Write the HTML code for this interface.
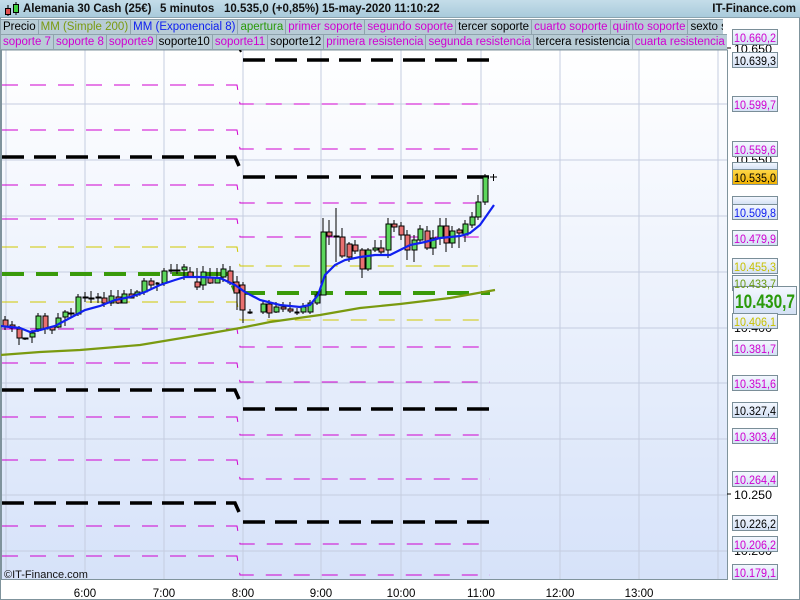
<!DOCTYPE html>
<html><head><meta charset="utf-8">
<style>
*{margin:0;padding:0;box-sizing:border-box}
body{width:800px;height:600px;overflow:hidden;background:#fff;font-family:"Liberation Sans",Arial,sans-serif;position:relative}
#title{position:absolute;left:0;top:0;width:800px;height:18px;background:linear-gradient(#c4dde9,#a9cadb);font-weight:bold;font-size:11.5px;line-height:18px;color:#111;border-bottom:1px solid #8aa4b0}
#title span{position:absolute;top:0}
.row{position:absolute;left:0;height:16px;white-space:nowrap;font-size:11.5px;line-height:15px;overflow:hidden}
.row span{display:inline-block;background:#b8ccd6;border:1px solid #8fa3ad;padding:0 2px;margin-right:-1px;height:16px}
svg{position:absolute;left:0;top:0}
</style></head><body>
<svg width="800" height="600">
<defs><linearGradient id="bg" x1="0" y1="0" x2="0" y2="1"><stop offset="0" stop-color="#ffffff"/><stop offset="1" stop-color="#d6e2f9"/></linearGradient>
<linearGradient id="lb" x1="0" y1="0" x2="0" y2="1"><stop offset="0" stop-color="#f4f8ff"/><stop offset="1" stop-color="#d3e0f4"/></linearGradient>
<linearGradient id="yb" x1="0" y1="0" x2="0" y2="1"><stop offset="0" stop-color="#ffd84a"/><stop offset="1" stop-color="#f0b000"/></linearGradient></defs>
<rect x="2" y="50" width="725" height="529" fill="url(#bg)"/>
<g stroke="#c5cde0" stroke-width="1">
<line x1="2" y1="104" x2="727" y2="104"/><line x1="2" y1="160" x2="727" y2="160"/><line x1="2" y1="216" x2="727" y2="216"/><line x1="2" y1="272" x2="727" y2="272"/><line x1="2" y1="328" x2="727" y2="328"/><line x1="2" y1="383" x2="727" y2="383"/><line x1="2" y1="439" x2="727" y2="439"/><line x1="2" y1="495" x2="727" y2="495"/><line x1="2" y1="551" x2="727" y2="551"/>
<line x1="6" y1="50" x2="6" y2="579"/><line x1="85" y1="50" x2="85" y2="579"/><line x1="164" y1="50" x2="164" y2="579"/><line x1="243" y1="50" x2="243" y2="579"/><line x1="321" y1="50" x2="321" y2="579"/><line x1="401" y1="50" x2="401" y2="579"/><line x1="481" y1="50" x2="481" y2="579"/><line x1="560" y1="50" x2="560" y2="579"/><line x1="639" y1="50" x2="639" y2="579"/><line x1="718" y1="50" x2="718" y2="579"/>
</g>
<rect x="1.5" y="50" width="726" height="529.5" fill="none" stroke="#7f939c"/>
<g fill="none" stroke="#d000d0" stroke-width="1" stroke-dasharray="16,12">
<path d="M2 85H237L240 104H490"/><path d="M2 130H237L240 149H490"/><path d="M2 185H237L240 203H490"/><path d="M2 219H237L240 237H490"/>
<path d="M2 329H237L240 347H490"/><path d="M2 363H237L240 382H490"/><path d="M2 417H237L240 435H490"/><path d="M2 460H237L240 479H490"/><path d="M2 526H237L240 544H490"/><path d="M2 556H237L240 575H490"/>
</g>
<g fill="none" stroke="#d0c800" stroke-width="1" stroke-dasharray="16,12">
<path d="M2 247H237L240 266H490"/><path d="M2 302H237L240 320H490"/>
</g>
<g fill="none" stroke="#000" stroke-width="3.5" stroke-dasharray="22,10">
<path d="M243 60H490"/><path d="M2 157H235L239 166"/><path d="M243 177H490"/><path d="M2 390H235L239 399"/><path d="M243 409H490"/><path d="M2 503H235L239 512"/><path d="M243 522H490"/>
</g>
<path d="M239 48L241 52" stroke="#000" stroke-width="2"/>
<path d="M2 274H228L236 293M243 293H490" fill="none" stroke="#3a9a0a" stroke-width="4" stroke-dasharray="22,12"/>
<path d="M0 355L40 352L80 350L140 345L200 335L240 328L270 322L320 315L360 308L400 304L450 298L495 290" fill="none" stroke="#7a9a10" stroke-width="2.2"/>
<g stroke="#000" stroke-width="1">
<path d="M5 316V330M12 321V332M19 326V345M25 338V340M32 330V343M38 313V332M45 313V334M52 327V334M58 313V328M65 310V326M71 308V318M78 294V316M85 292V302M91 291V303M98 293V303M104 292V307M111 290V306M118 290V304M124 290V299M131 289V297M137 290V297M144 278V295M151 278V290M157 282V291M164 268V286M171 264V274M177 264V274M184 264V280M190 267V272M197 268V290M203 266V290M210 268V284M217 268V282M223 264V282M230 266V285M237 276V310M243 282V323M250 309V314M263 300V314M269 300V318M276 302V313M283 302V312M290 302V313M297 308V315M303 303V314M310 300V314M317 292V305M323 218V295M329 220V245M336 208V262M342 228V258M349 242V262M355 240V254M362 248V278M368 248V271M375 240V252M381 240V255M388 218V258M394 220V232M401 222V240M407 230V260M414 235V262M420 225V242M427 226V250M433 230V255M440 218V245M446 218V252M452 226V248M459 228V248M465 220V242M472 212V228M478 195V220M485 174V205"/>
</g>
<g stroke="#000" stroke-width="1">
<rect x="3" y="320" width="5" height="6" fill="#e87070"/><rect x="10" y="325" width="5" height="3" fill="#e87070"/><rect x="17" y="329" width="5" height="9" fill="#e87070"/><rect x="23" y="338" width="5" height="1" fill="#e87070"/><rect x="30" y="333" width="5" height="4" fill="#5cd65c"/><rect x="36" y="316" width="5" height="13" fill="#5cd65c"/><rect x="43" y="316" width="5" height="13" fill="#e87070"/><rect x="50" y="327" width="5" height="3" fill="#e87070"/><rect x="56" y="318" width="5" height="9" fill="#5cd65c"/><rect x="63" y="312" width="5" height="5" fill="#5cd65c"/><rect x="69" y="313" width="5" height="1" fill="#000"/><rect x="76" y="297" width="5" height="17" fill="#5cd65c"/><rect x="83" y="297" width="5" height="1" fill="#000"/><rect x="89" y="298" width="5" height="1" fill="#000"/><rect x="96" y="297" width="5" height="1" fill="#000"/><rect x="102" y="298" width="5" height="5" fill="#e87070"/><rect x="109" y="296" width="5" height="7" fill="#5cd65c"/><rect x="116" y="297" width="5" height="6" fill="#e87070"/><rect x="122" y="294" width="5" height="9" fill="#5cd65c"/><rect x="129" y="294" width="5" height="4" fill="#e87070"/><rect x="135" y="292" width="5" height="3" fill="#5cd65c"/><rect x="142" y="281" width="5" height="11" fill="#5cd65c"/><rect x="149" y="281" width="5" height="4" fill="#e87070"/><rect x="156" y="283" width="3" height="1" fill="#000"/><rect x="162" y="271" width="5" height="12" fill="#5cd65c"/><rect x="169" y="270" width="5" height="1" fill="#000"/><rect x="175" y="270" width="5" height="1" fill="#000"/><rect x="182" y="267" width="5" height="3" fill="#5cd65c"/><rect x="188" y="272" width="5" height="5" fill="#e87070"/><rect x="195" y="282" width="5" height="5" fill="#e87070"/><rect x="201" y="272" width="5" height="13" fill="#5cd65c"/><rect x="208" y="277" width="5" height="6" fill="#e87070"/><rect x="215" y="278" width="5" height="5" fill="#5cd65c"/><rect x="221" y="269" width="5" height="8" fill="#5cd65c"/><rect x="228" y="271" width="5" height="12" fill="#e87070"/><rect x="234" y="282" width="5" height="11" fill="#e87070"/><rect x="240" y="285" width="5" height="25" fill="#e87070"/><rect x="248" y="312" width="4" height="1" fill="#000"/><rect x="261" y="304" width="5" height="8" fill="#5cd65c"/><rect x="267" y="304" width="5" height="9" fill="#e87070"/><rect x="274" y="307" width="5" height="5" fill="#5cd65c"/><rect x="281" y="307" width="5" height="2" fill="#e87070"/><rect x="288" y="309" width="5" height="2" fill="#e87070"/><rect x="295" y="312" width="4" height="1" fill="#000"/><rect x="301" y="307" width="5" height="5" fill="#5cd65c"/><rect x="308" y="303" width="5" height="9" fill="#5cd65c"/><rect x="315" y="295" width="5" height="8" fill="#5cd65c"/><rect x="321" y="232" width="5" height="63" fill="#5cd65c"/><rect x="327" y="232" width="5" height="4" fill="#e87070"/><rect x="334" y="236" width="5" height="1" fill="#000"/><rect x="340" y="237" width="5" height="19" fill="#e87070"/><rect x="347" y="244" width="5" height="13" fill="#e87070"/><rect x="353" y="245" width="5" height="6" fill="#e87070"/><rect x="360" y="250" width="5" height="19" fill="#e87070"/><rect x="366" y="250" width="5" height="19" fill="#5cd65c"/><rect x="373" y="248" width="5" height="2" fill="#5cd65c"/><rect x="379" y="248" width="5" height="4" fill="#e87070"/><rect x="386" y="224" width="5" height="26" fill="#5cd65c"/><rect x="392" y="224" width="5" height="3" fill="#e87070"/><rect x="399" y="226" width="5" height="9" fill="#e87070"/><rect x="405" y="235" width="5" height="15" fill="#e87070"/><rect x="412" y="240" width="5" height="10" fill="#5cd65c"/><rect x="418" y="229" width="5" height="11" fill="#5cd65c"/><rect x="425" y="231" width="5" height="17" fill="#e87070"/><rect x="431" y="238" width="5" height="10" fill="#5cd65c"/><rect x="438" y="226" width="5" height="12" fill="#5cd65c"/><rect x="444" y="226" width="5" height="17" fill="#e87070"/><rect x="450" y="231" width="5" height="12" fill="#5cd65c"/><rect x="457" y="230" width="5" height="3" fill="#e87070"/><rect x="463" y="224" width="5" height="11" fill="#5cd65c"/><rect x="470" y="217" width="5" height="8" fill="#5cd65c"/><rect x="476" y="202" width="5" height="15" fill="#5cd65c"/><rect x="483" y="177" width="5" height="25" fill="#5cd65c"/>
</g>
<path d="M490 177h7M493.5 174v7" stroke="#000"/>
<path d="M0 326L20 328L30 332L40 330L55 326L70 318L85 310L100 306L115 300L130 297L145 292L160 285L175 280L185 277L200 277L220 278L235 285L245 292L260 300L280 305L300 307L310 305L318 295L325 275L335 265L345 260L360 257L375 255L390 255L400 250L410 245L425 242L440 238L460 236L470 233L480 225L487 215L494 205" fill="none" stroke="#1020f0" stroke-width="2.2"/>
<text x="4" y="578" font-size="11" fill="#111" font-family="Liberation Sans">©IT-Finance.com</text>
<g font-family="Liberation Sans" font-size="11.5" fill="#000">
<g stroke="#000"><line x1="727" y1="48" x2="731" y2="48"/><line x1="727" y1="494" x2="731" y2="494"/></g>
<text x="734" y="53" textLength="38" lengthAdjust="spacingAndGlyphs">10.650</text><text x="734" y="164" textLength="38" lengthAdjust="spacingAndGlyphs">10.550</text><text x="734" y="332" textLength="38" lengthAdjust="spacingAndGlyphs">10.400</text><text x="734" y="499" textLength="38" lengthAdjust="spacingAndGlyphs">10.250</text><text x="734" y="555" textLength="38" lengthAdjust="spacingAndGlyphs">10.200</text>
</g>
<g font-family="Liberation Sans" font-size="12">
<g stroke="#7a8e98" fill="url(#lb)">
<rect x="732.5" y="29.5" width="45" height="15"/><rect x="732.5" y="52.5" width="45" height="15"/><rect x="732.5" y="96.5" width="45" height="15"/><rect x="732.5" y="141.5" width="45" height="15"/><rect x="732.5" y="162.5" width="45" height="7"/><rect x="732.5" y="169.5" width="45" height="15" fill="url(#yb)"/><rect x="732.5" y="196.5" width="45" height="8"/><rect x="732.5" y="204.5" width="45" height="15"/><rect x="732.5" y="230.5" width="45" height="15"/><rect x="732.5" y="258.5" width="45" height="15"/><rect x="732.5" y="275.5" width="45" height="15"/><rect x="733.5" y="286.5" width="63" height="28"/><rect x="732.5" y="313.5" width="45" height="15"/><rect x="732.5" y="340.5" width="45" height="15"/><rect x="732.5" y="375.5" width="45" height="15"/><rect x="732.5" y="402.5" width="45" height="15"/><rect x="732.5" y="428.5" width="45" height="15"/><rect x="732.5" y="471.5" width="45" height="15"/><rect x="732.5" y="515.5" width="45" height="15"/><rect x="732.5" y="536.5" width="45" height="15"/><rect x="732.5" y="564.5" width="45" height="15"/>
</g>
<text x="734" y="42" fill="#d000d0" textLength="42" lengthAdjust="spacingAndGlyphs">10.660,2</text>
<text x="734" y="65" fill="#000" textLength="42" lengthAdjust="spacingAndGlyphs">10.639,3</text>
<text x="734" y="109" fill="#d000d0" textLength="42" lengthAdjust="spacingAndGlyphs">10.599,7</text>
<text x="734" y="154" fill="#d000d0" textLength="42" lengthAdjust="spacingAndGlyphs">10.559,6</text>
<text x="734" y="182" fill="#000" textLength="42" lengthAdjust="spacingAndGlyphs">10.535,0</text>
<text x="734" y="217" fill="#1020f0" textLength="42" lengthAdjust="spacingAndGlyphs">10.509,8</text>
<text x="734" y="243" fill="#d000d0" textLength="42" lengthAdjust="spacingAndGlyphs">10.479,9</text>
<text x="734" y="271" fill="#c8c000" textLength="42" lengthAdjust="spacingAndGlyphs">10.455,3</text>
<text x="734" y="288" fill="#6a9a10" textLength="42" lengthAdjust="spacingAndGlyphs">10.433,7</text>
<text x="735" y="308" fill="#2a9a0a" font-size="19" font-weight="bold" textLength="60" lengthAdjust="spacingAndGlyphs">10.430,7</text>
<text x="734" y="326" fill="#c8c000" textLength="42" lengthAdjust="spacingAndGlyphs">10.406,1</text>
<text x="734" y="353" fill="#d000d0" textLength="42" lengthAdjust="spacingAndGlyphs">10.381,7</text>
<text x="734" y="388" fill="#d000d0" textLength="42" lengthAdjust="spacingAndGlyphs">10.351,6</text>
<text x="734" y="415" fill="#000" textLength="42" lengthAdjust="spacingAndGlyphs">10.327,4</text>
<text x="734" y="441" fill="#d000d0" textLength="42" lengthAdjust="spacingAndGlyphs">10.303,4</text>
<text x="734" y="484" fill="#d000d0" textLength="42" lengthAdjust="spacingAndGlyphs">10.264,4</text>
<text x="734" y="528" fill="#000" textLength="42" lengthAdjust="spacingAndGlyphs">10.226,2</text>
<text x="734" y="549" fill="#d000d0" textLength="42" lengthAdjust="spacingAndGlyphs">10.206,2</text>
<text x="734" y="577" fill="#d000d0" textLength="42" lengthAdjust="spacingAndGlyphs">10.179,1</text>
</g>
<g font-family="Liberation Sans" font-size="11.5" fill="#000" text-anchor="middle">
<text x="85" y="597">6:00</text><text x="164" y="597">7:00</text><text x="243" y="597">8:00</text><text x="321" y="597">9:00</text><text x="401" y="597">10:00</text><text x="481" y="597">11:00</text><text x="560" y="597">12:00</text><text x="639" y="597">13:00</text>
</g>
<rect x="0.5" y="0.5" width="799" height="599" fill="none" stroke="#7f939c"/>
</svg>
<div id="title">
<svg width="20" height="18" style="position:absolute;left:2px;top:0"><path d="M6 5V16M14 2V15" stroke="#000"/><rect x="3.5" y="8.5" width="5" height="6" fill="#e05050" stroke="#000"/><rect x="11.5" y="4.5" width="5" height="8" fill="#40d040" stroke="#000"/></svg>
<span style="left:23px">Alemania 30 Cash (25€)</span>
<span style="left:160px">5 minutos</span>
<span style="left:224px">10.535,0 (+0,85%)</span>
<span style="left:322px">15-may-2020 11:10:22</span>
<span style="right:4px">IT-Finance.com</span>
</div>
<div class="row" style="top:19px;width:723px"><span>Precio</span><span style="color:#7a9a10">MM (Simple 200)</span><span style="color:#1020f0">MM (Exponencial 8)</span><span style="color:#2a9a0a">apertura</span><span style="color:#d000d0">primer soporte</span><span style="color:#d000d0">segundo soporte</span><span>tercer soporte</span><span style="color:#d000d0">cuarto soporte</span><span style="color:#d000d0">quinto soporte</span><span>sexto soporte</span></div>
<div class="row" style="top:34px;width:727px"><span style="color:#d000d0">soporte 7</span><span style="color:#d000d0">soporte 8</span><span style="color:#d000d0">soporte9</span><span>soporte10</span><span style="color:#d000d0">soporte11</span><span>soporte12</span><span style="color:#d000d0">primera resistencia</span><span style="color:#d000d0">segunda resistencia</span><span>tercera resistencia</span><span style="color:#d000d0">cuarta resistencia</span><span style="color:#d000d0">quinta resistencia</span></div>
</body></html>
